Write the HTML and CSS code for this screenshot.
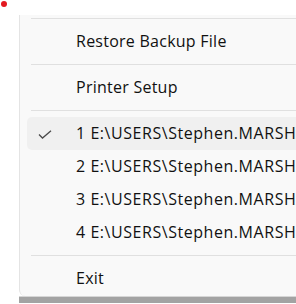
FILE: index.html
```html
<!DOCTYPE html>
<html>
<head>
<meta charset="utf-8">
<link rel="stylesheet" href="styles.css">
</head>
<body>
<span class="dot"></span>
<div class="wrap">
  <div class="menu">
    <div class="sep first"></div>
    <div class="item">Restore Backup File</div>
    <div class="sep"></div>
    <div class="item">Printer Setup</div>
    <div class="sep"></div>
    <div class="item path active">
      <svg class="check" width="14" height="9" viewBox="0 0 14 9"><path d="M1 4.5 L4.5 8 L13 0.8" fill="none" stroke="#4a4a4a" stroke-width="1.3"/></svg>
      1 E:\USERS\Stephen.MARSHALL\Documents\Backup.db
    </div>
    <div class="item path">2 E:\USERS\Stephen.MARSHALL\Documents\Backup.db</div>
    <div class="item path">3 E:\USERS\Stephen.MARSHALL\Documents\Backup.db</div>
    <div class="item path">4 E:\USERS\Stephen.MARSHALL\Documents\Backup.db</div>
    <div class="sep"></div>
    <div class="item">Exit</div>
  </div>
  <div class="under"></div>
</div>
</body>
</html>
```

FILE: styles.css
```css
html, body {
  margin: 0;
  padding: 0;
  background: #ffffff;
  overflow: hidden;
  width: 296px;
  height: 304px;
}
body {
  position: relative;
  font-family: "Open Sans", "Noto Sans", sans-serif;
  font-size: 16px;
  letter-spacing: 0.25px;
  color: #111111;
}
.dot {
  position: absolute;
  left: 1px;
  top: 1px;
  width: 6px;
  height: 6px;
  border-radius: 50%;
  background: #e3191f;
}
.wrap {
  margin-left: 19px;
  padding-top: 15px;
  width: 320px;
}
.menu {
  background: #f9f9f9;
  border-left: 1px solid #e4e4e4;
  border-bottom-left-radius: 6px;
  padding-top: 3px;
  padding-bottom: 1px;
}
.sep {
  height: 1px;
  background: #e0e0e0;
  margin: 6px 0 6px 11px;
}
.sep.first {
  margin-top: 0;
}
.item {
  position: relative;
  height: 33px;
  line-height: 33px;
  padding-left: 49px;
  margin-left: 7px;
  white-space: nowrap;
  border-radius: 5px;
}
.item.path {
  letter-spacing: 0.55px;
}
.item.active {
  background: #f0f0f0;
}
.check {
  position: absolute;
  left: 11px;
  top: 13px;
}
.under {
  height: 6px;
  background: #a3a3a3;
  border-top: 1px solid #d6d6d6;
}
```
